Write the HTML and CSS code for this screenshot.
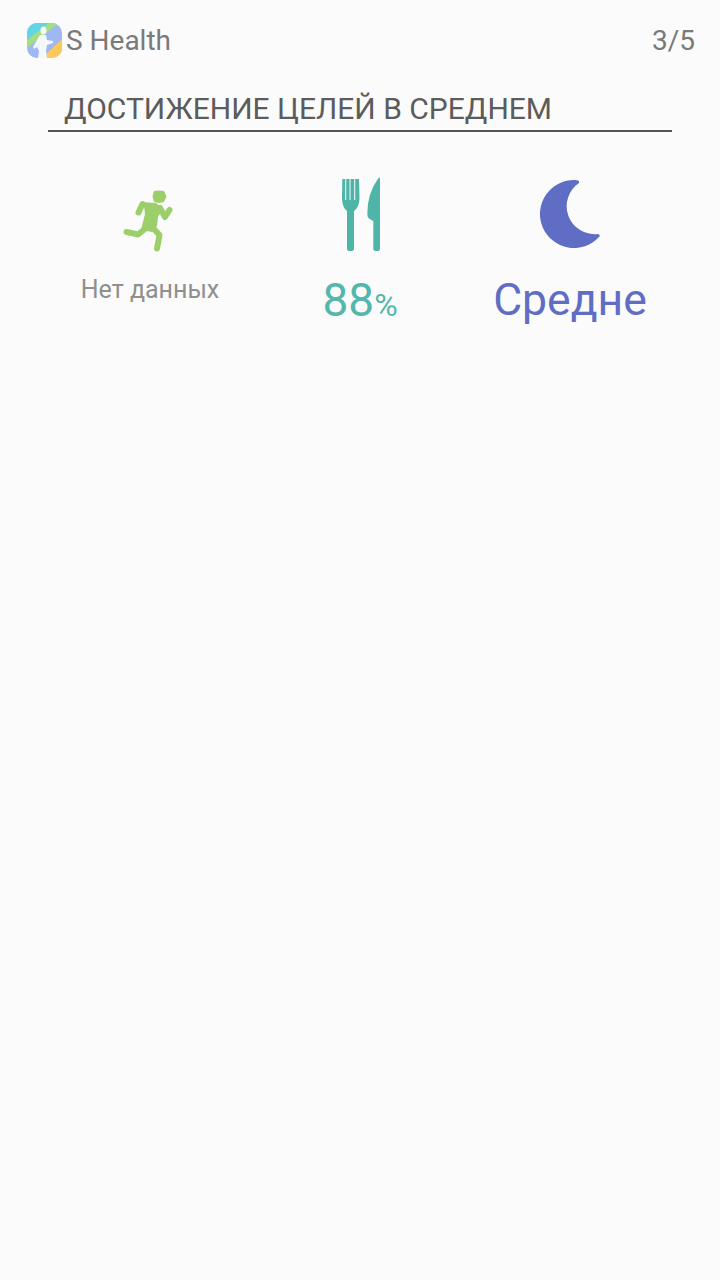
FILE: index.html
```html
<!DOCTYPE html>
<html lang="ru">
<head>
    <meta charset="UTF-8">
    <meta name="viewport" content="width=device-width, initial-scale=1.0">
    <title>S Health</title>
    <link rel="stylesheet" href="styles.css">
</head>
<body>
    <div class="topbar">
        <div class="app">
            <svg class="app-icon" viewBox="0 0 35 35" width="35" height="35">
                <defs>
                    <clipPath id="iconClip"><rect width="35" height="35" rx="10"/></clipPath>
                </defs>
                <g clip-path="url(#iconClip)">
                    <rect width="35" height="35" fill="#9db8f2"/>
                    <polygon points="0,0 22,0 0,17" fill="#62d4e6"/>
                    <polygon points="22,0 32,0 0,25 0,17" fill="#a5dd80"/>
                    <polygon points="35,16 35,35 15,35" fill="#fcc85c"/>
                    <ellipse cx="16.500" cy="7.500" rx="3" ry="4" fill="#f4f8fb"/>
                    <path d="M13 12 L19 12 L20 17 L26 18 L26 20 L20 22 L19 28 L20 35 L11 35 L12 28 L10 24 L7 26 L6 24 L10 17 Z" fill="#f4f8fb"/>
                </g>
            </svg>
            <span class="app-name">S Health</span>
        </div>
        <span class="pager">3/5</span>
    </div>

    <h1 class="title">ДОСТИЖЕНИЕ ЦЕЛЕЙ В СРЕДНЕМ</h1>

    <div class="goals">
        <div class="goal">
            <div class="goal-icon">
                <!-- runner -->
                <svg viewBox="0 -5 100 90" width="100" height="90">
                    <polygon points="54,21 59,20.500 64,21 66.500,26.500 64,32 59,33 54,32 52.500,26.500" fill="#9ccf6a"/>
                    <polygon points="41,32 56,33 63,39 58,47 57,56 52,62 41,60 45,44 44,36" fill="#9ccf6a"/>
                    <g class="runner-limbs">
                        <polyline points="42.500,34 38.500,42.500"/>
                        <polyline points="60,38 65,47 69.500,40"/>
                        <polyline points="52,57 59.500,65 57,78.500"/>
                        <polyline points="46,58 38,64.500 26.500,62"/>
                    </g>
                </svg>
            </div>
            <div class="goal-nodata">Нет данных</div>
        </div>
        <div class="goal">
            <div class="goal-icon">
                <!-- fork and knife -->
                <svg viewBox="0 0 90 90" width="90" height="90">
                    <path d="M27.300 14 H30.200 V35 H31.200 V14 H34.500 V35 H35.500 V14 H39.200 V35 H40.200 V14 H44 L44.500 33 Q44.500 42 39 46 V84 Q39 86 35.500 86 Q32 86 32 84 V46 Q27 42 27 33 Z" fill="#4fb5a9"/>
                    <path d="M63.500 13 Q65 11.500 65 14 V84 Q65 86 61.700 86 Q58.300 86 58.300 84 V56 L54 53.500 Q52.300 52.500 52.300 49 Q52.300 28 63.500 13 Z" fill="#4fb5a9"/>
                </svg>
            </div>
            <div class="goal-value teal">88<span class="unit">%</span></div>
        </div>
        <div class="goal">
            <div class="goal-icon">
                <!-- moon -->
                <svg viewBox="0 0 100 90" width="100" height="90">
                    <path d="M55 15 Q60 15 59 18 A 28 28 0 0 0 78 69 Q81 70 79 72 A 34 34 0 1 1 55 15 Z" fill="#5f6dc4"/>
                </svg>
            </div>
            <div class="goal-value indigo">Средне</div>
        </div>
    </div>
</body>
</html>
```
FILE: styles.css
```css
body {
    margin: 0;
    height: 1280px;
    background-color: #fbfbfb;
    font-family: Roboto, "Noto Sans", sans-serif;
    overflow: hidden;
}

.topbar {
    display: flex;
    align-items: center;
    justify-content: space-between;
    height: 36px;
    padding: 22px 25px 0 27px;
}

.app {
    display: flex;
    align-items: center;
}

.app-icon {
    margin-right: 4px;
}

.app-name, .pager {
    font-size: 28px;
    color: #7a7a7a;
}

.title {
    margin: 20px 48px 0;
    padding: 0 16px;
    height: 54px;
    line-height: 62px;
    box-sizing: border-box;
    font-size: 30px;
    font-weight: 400;
    color: #5c5c5c;
    border-bottom: 2px solid #555555;
    white-space: nowrap;
}

.goals {
    display: grid;
    grid-template-columns: repeat(3, 210px);
    margin: 33px 0 0 45px;
}

.goal {
    display: flex;
    flex-direction: column;
    align-items: center;
}

.goal-icon {
    height: 90px;
}

.goal-icon svg {
    display: block;
}

.runner-limbs polyline {
    fill: none;
    stroke: #9ccf6a;
    stroke-width: 6;
    stroke-linecap: round;
    stroke-linejoin: round;
}

.goal-nodata {
    margin-top: 20px;
    font-size: 25px;
    color: #8f8f8f;
}

.goal-value {
    margin-top: 15px;
    font-size: 44.500px;
    line-height: 60px;
}

.unit {
    font-size: 32px;
}

.teal {
    color: #55b7ac;
    font-size: 46px;
}

.indigo {
    color: #5f6dc4;
}
```
